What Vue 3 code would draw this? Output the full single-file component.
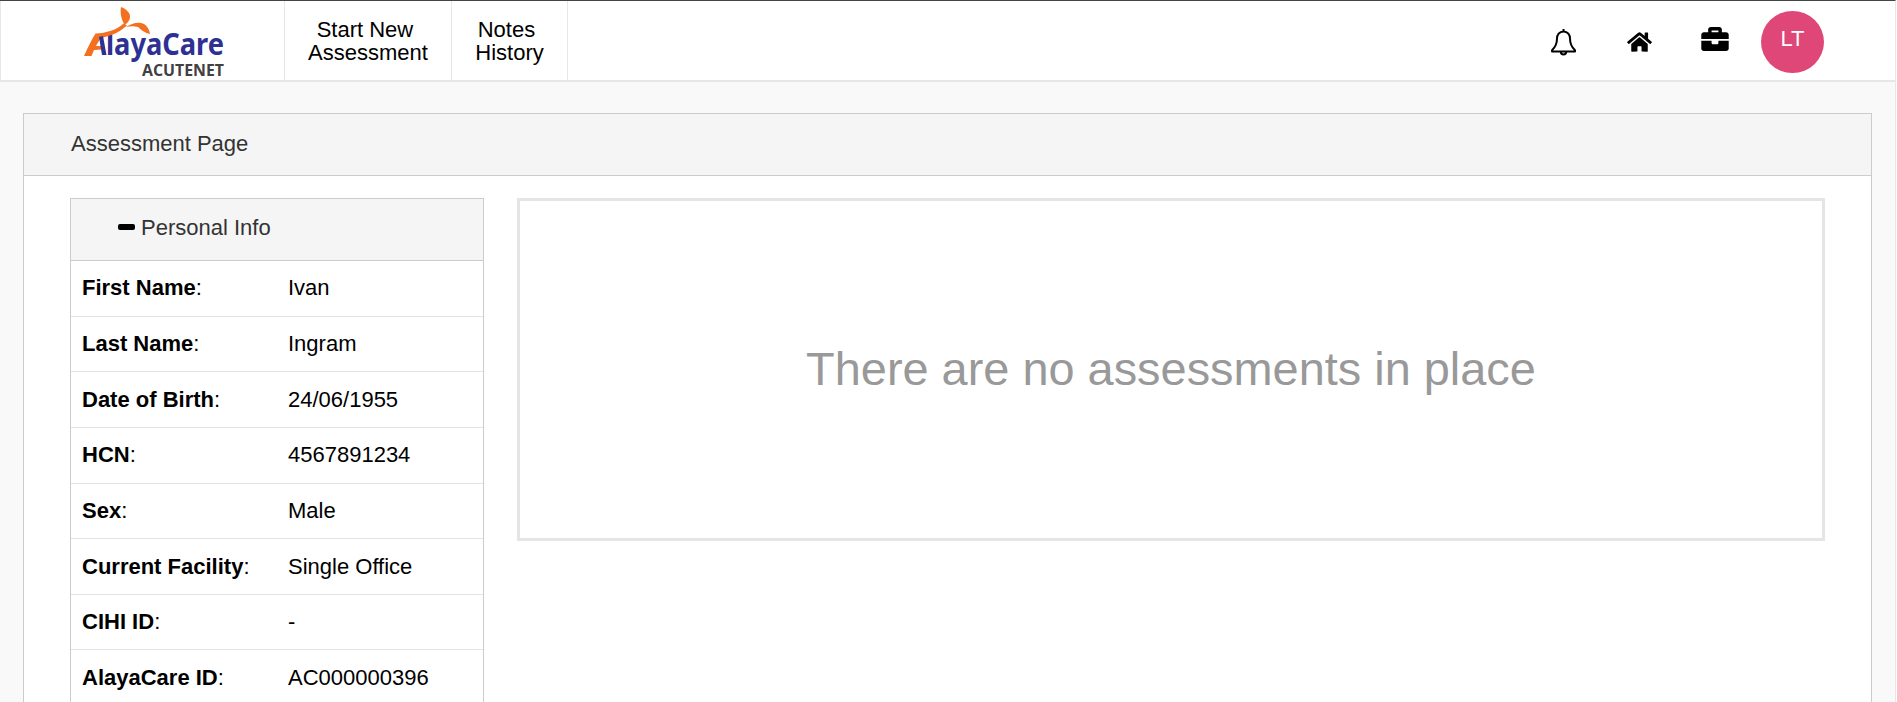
<script setup>
const rows = [
  ['First Name', 'Ivan'],
  ['Last Name', 'Ingram'],
  ['Date of Birth', '24/06/1955'],
  ['HCN', '4567891234'],
  ['Sex', 'Male'],
  ['Current Facility', 'Single Office'],
  ['CIHI ID', '-'],
  ['AlayaCare ID', 'AC000000396'],
]
</script>

<template>
  <div class="page">
    <header class="topbar">
      <div class="brand">
        <svg class="logo" viewBox="0 0 283 80" width="283" height="80">
          <text class="logo-word" x="105" y="55" textLength="118" lengthAdjust="spacingAndGlyphs">layaCare</text>
          <path d="M83 56C87 47 91 39 94.500 33.500C105 33 116 30 122.500 23.500L126 25.500C119 32 109 36.500 99.500 38C98 41 96 44 95 46L101 46L101 49.500L93 50L90.500 56Z" fill="#f37021" />
          <path d="M124 25C120 20 119 12 120 7C125 9 130 13 129 18C128.500 21 126 23 124 25Z" fill="#f37021" />
          <path d="M125 27C130 24 135 22 140 23C145 24 148 28 149 34C144 33 140 30 137 27C133 26 129 26 125 27Z" fill="#f37021" />
          <path d="M98 37L102 36L105.500 55L101 55Z" fill="#2e3192" />
          <text class="logo-sub" x="141" y="76" textLength="82" lengthAdjust="spacingAndGlyphs">ACUTENET</text>
        </svg>
      </div>
      <a class="nav nav-start">Start New&nbsp;<br />Assessment</a>
      <a class="nav nav-notes">Notes&nbsp;<br />History</a>
      <div class="tools">
        <svg class="bell" viewBox="0 0 25 28" width="25" height="28" fill="none" stroke="#000" stroke-width="2" stroke-linejoin="round">
          <path d="M12.500 1v2.400M12.500 3.400C8.200 3.400 6 7 6 10.600c0 6-2.400 9.300-5 11.700v1.200h23v-1.200c-2.600-2.400-5-5.700-5-11.700 0-3.600-2.200-7.200-6.500-7.200z" />
          <path d="M9.800 23.800a2.700 2.700 0 0 0 5.400 0" />
        </svg>
        <svg class="home" viewBox="0 0 576 512" width="25" height="22">
          <path d="M280.37 148.26L96 300.11V464a16 16 0 0 0 16 16l112.06-.29a16 16 0 0 0 15.92-16V368a16 16 0 0 1 16-16h64a16 16 0 0 1 16 16v95.64a16 16 0 0 0 16 16.05L464 480a16 16 0 0 0 16-16V300L295.67 148.26a12.19 12.19 0 0 0-15.3 0zM571.6 251.47L488 182.56V44.05a12 12 0 0 0-12-12h-56a12 12 0 0 0-12 12v72.61L318.47 43a48 48 0 0 0-61 0L4.34 251.47a12 12 0 0 0-1.6 16.9l25.5 31A12 12 0 0 0 45.15 301l235.22-193.74a12.19 12.19 0 0 1 15.3 0L530.9 301a12 12 0 0 0 16.9-1.6l25.5-31a12 12 0 0 0-1.7-16.93z" />
        </svg>
        <svg class="case" viewBox="0 32 512 448" width="28" height="24">
          <path d="M320 336c0 8.84-7.16 16-16 16h-96c-8.84 0-16-7.16-16-16v-48H0v144c0 25.6 22.4 48 48 48h416c25.6 0 48-22.4 48-48V288H320v48zm144-208h-80V80c0-25.600-22.400-48-48-48H176c-25.600 0-48 22.400-48 48v48H48c-25.600 0-48 22.400-48 48v80h512v-80c0-25.600-22.400-48-48-48zm-144 0H192V96h128v32z" />
        </svg>
        <div class="avatar">LT</div>
      </div>
    </header>

    <section class="panel">
      <div class="panel-title">Assessment Page</div>
      <div class="panel-body">
        <div class="info">
          <div class="info-title"><span class="minus"></span>Personal Info</div>
          <div v-for="row in rows" :key="row[0]" class="row">
            <span class="label"><b>{{ row[0] }}</b>:</span>
            <span class="value">{{ row[1] }}</span>
          </div>
        </div>
        <div class="empty">There are no assessments in place</div>
      </div>
    </section>
  </div>
</template>

<style scoped>
.page {
  box-sizing: border-box;
  width: 1896px;
  height: 702px;
  overflow: hidden;
  background: #f9f9f9;
  border-top: 1px solid #444;
  border-right: 1px solid #e7e7e7;
  font-family: "Liberation Sans", Arial, sans-serif;
  font-size: 22px;
  color: #000;
}
.topbar {
  display: flex;
  box-sizing: border-box;
  height: 81px;
  background: #fff;
  border-left: 1px solid #e7e7e7;
  border-bottom: 2px solid #e7e7e7;
}
.brand {
  width: 283px;
  flex: none;
  border-right: 1px solid #e7e7e7;
}
.logo {
  display: block;
  margin-top: -1px;
}
.logo-word {
  font-family: "Noto Sans", sans-serif;
  font-weight: 700;
  font-size: 30px;
  fill: #2e3192;
}
.logo-sub {
  font-family: "Open Sans", sans-serif;
  font-weight: 700;
  font-size: 16px;
  fill: #414042;
}
.nav {
  display: flex;
  align-items: center;
  justify-content: center;
  flex: none;
  box-sizing: border-box;
  text-align: center;
  line-height: 23px;
  border-right: 1px solid #e7e7e7;
  padding-top: 1px;
}
.nav-start {
  width: 167px;
}
.nav-notes {
  width: 116px;
}
.tools {
  display: flex;
  align-items: center;
  margin-left: auto;
  padding-right: 71px;
}
.bell {
  margin-right: 51px;
  margin-top: 2px;
}
.home {
  margin-right: 49px;
  margin-top: 3px;
}
.case {
  margin-right: 32px;
  margin-top: -3px;
}
.avatar {
  width: 63px;
  height: 62px;
  border-radius: 50%;
  background: #df4778;
  color: #fff;
  text-align: center;
  line-height: 56px;
  margin-top: 2px;
}
.panel {
  box-sizing: border-box;
  width: 1849px;
  height: 700px;
  margin: 31px 0 0 23px;
  background: #fff;
  border: 1px solid #ccc;
}
.panel-title {
  box-sizing: border-box;
  height: 62px;
  padding: 15px 47px 0;
  line-height: 30px;
  color: #333;
  background: #f5f5f5;
  border-bottom: 1px solid #ccc;
}
.panel-body {
  display: flex;
  align-items: flex-start;
  gap: 33px;
  padding: 22px 46px 0 46px;
}
.info {
  box-sizing: border-box;
  flex: none;
  width: 414px;
  border: 1px solid #ccc;
}
.info-title {
  display: flex;
  align-items: center;
  box-sizing: border-box;
  height: 62px;
  padding: 0 0 3px 47px;
  color: #333;
  background: #f5f5f5;
  border-bottom: 1px solid #ccc;
}
.minus {
  width: 17px;
  height: 6px;
  margin: -3px 6px 0 0;
  border-radius: 2px;
  background: #000;
}
.row {
  display: flex;
  align-items: center;
  box-sizing: border-box;
  height: 55.65px;
  padding-left: 11px;
  border-bottom: 1px solid #e3e3e3;
}
.label {
  flex: none;
  width: 206px;
}
.empty {
  display: flex;
  align-items: center;
  justify-content: center;
  box-sizing: border-box;
  flex: 1;
  height: 343px;
  padding-bottom: 2px;
  font-size: 46.9px;
  color: #999;
  border: 3px solid #e5e5e5;
}
</style>

<style>
html,
body {
  margin: 0;
  overflow: hidden;
  background: #fff;
}
</style>
